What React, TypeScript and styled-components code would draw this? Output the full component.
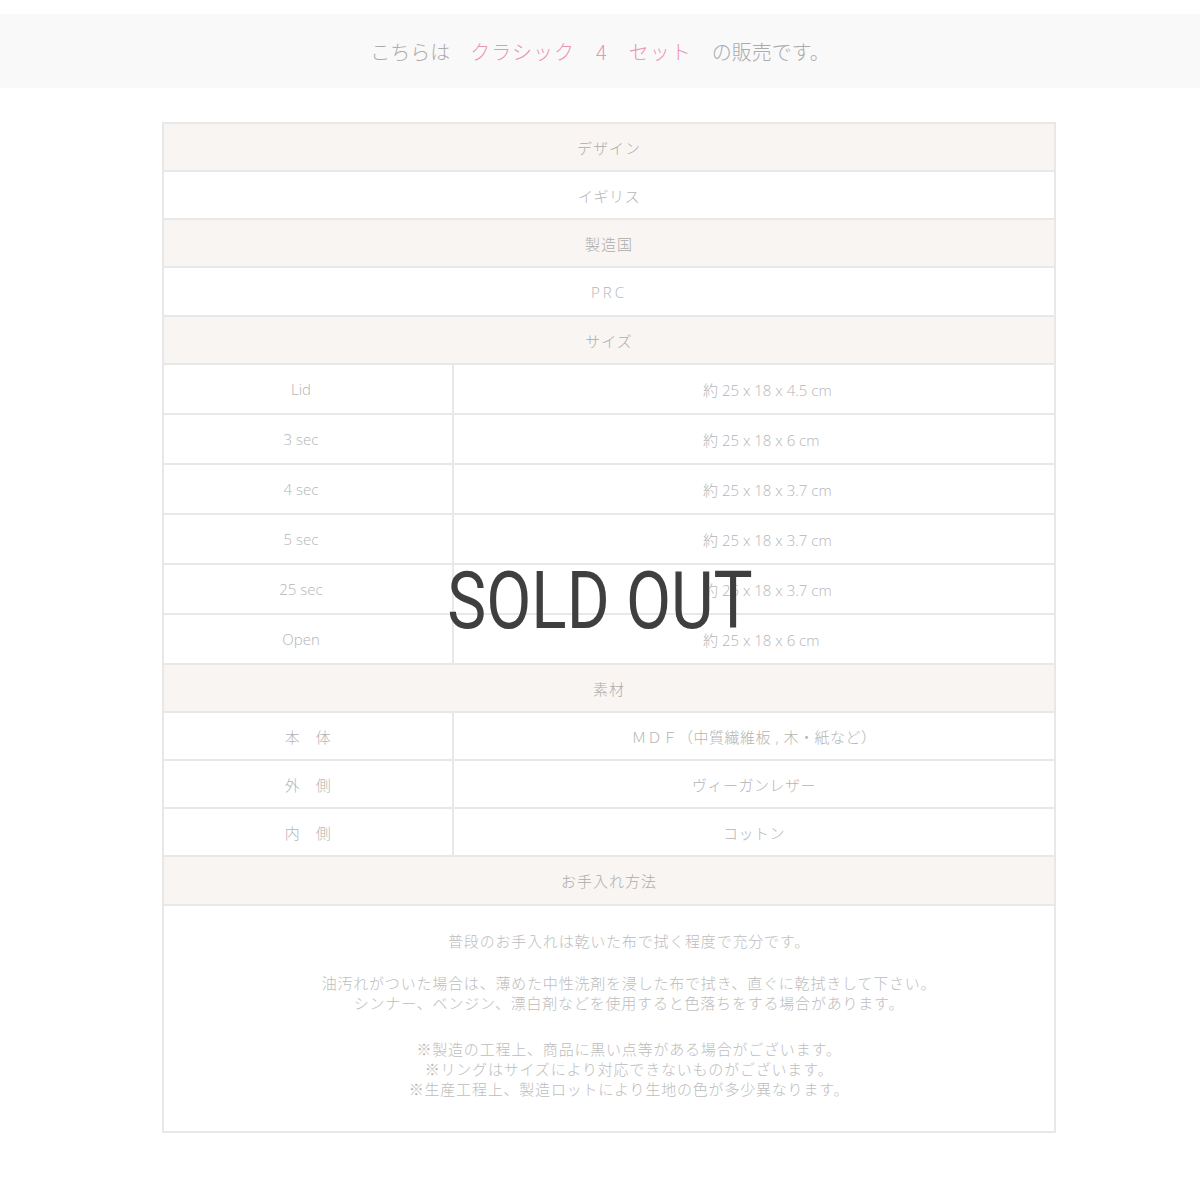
import React from 'react';
import styled, {createGlobalStyle} from 'styled-components';

const Global = createGlobalStyle`
  body {
    margin: 0;
    background: white;
    font-family: "Open Sans", "Noto Sans CJK JP", sans-serif;
  }
`
const Page = styled.div`
  position: relative;
  width: 1200px;
  min-height: 1200px;
  padding-top: 14px;
  box-sizing: border-box;
`
const Banner = styled.div`
  height: 74px;
  background: #f9f9f9;
  display: flex;
  align-items: center;
  justify-content: center;
  font-family: "Noto Sans CJK JP", sans-serif;
  font-size: 20px;
  font-weight: 300;
  color: #ababab;
  white-space: pre;
  >em{
    font-style: normal;
    color: #ea94b6;
    letter-spacing: 1px;
  }
`
const Table = styled.table`
  margin: 34px 0 0 162px;
  width: 894px;
  border-collapse: collapse;
  table-layout: fixed;
  border: 2px solid #e8e8e8;
  color: #b5b5b5;
  font-size: 15px;
  font-weight: 300;
  td {
    border: 2px solid #e8e8e8;
    text-align: center;
    padding: 0;
  }
`
const Head = styled.td<{h?: number}>`
  background: #f8f5f3;
  height: ${p => p.h || 46}px;
  letter-spacing: 1px;
  color: #acacac;
`
const Cell = styled.td<{h?: number; wide?: boolean}>`
  height: ${p => p.h || 46}px;
  letter-spacing: ${p => p.wide ? '3px' : '0.5px'};
`
const SizeLabel = styled.td`
  height: 48px;
  padding-right: 14px !important;
`
const SizeValue = styled.td`
  height: 48px;
  text-align: left !important;
  padding-left: 249px !important;
  letter-spacing: 0;
`
const Note = styled.td`
  padding: 25px 0 32px 40px !important;
  font-family: "Noto Sans CJK JP", sans-serif;
  font-size: 15px;
  letter-spacing: 0.8px;
  line-height: 20px;
  color: #bdbdbd;
  >p{
    margin: 0 0 22px;
  }
  >p:nth-child(2){
    margin-bottom: 26px;
  }
  >p:last-child{
    margin: 0;
  }
`
const SoldOut = styled.div`
  position: absolute;
  top: 562px;
  left: 0;
  right: 0;
  text-align: center;
  font-family: Roboto, sans-serif;
  font-size: 79px;
  line-height: 1;
  color: #3f3f3f;
  transform: scaleX(0.83);
  pointer-events: none;
`

const sizes = [
  ['Lid', '約 25 x 18 x 4.5 cm'],
  ['3 sec', '約 25 x 18 x 6 cm'],
  ['4 sec', '約 25 x 18 x 3.7 cm'],
  ['5 sec', '約 25 x 18 x 3.7 cm'],
  ['25 sec', '約 25 x 18 x 3.7 cm'],
  ['Open', '約 25 x 18 x 6 cm'],
]
const materials = [
  ['本　体', 'ＭＤＦ（中質繊維板 , 木・紙など）'],
  ['外　側', 'ヴィーガンレザー'],
  ['内　側', 'コットン'],
]

export default function App() {
  return (
    <Page>
      <Global/>
      <Banner>
        こちらは　<em>クラシック　4　セット</em>　の販売です。
      </Banner>
      <Table>
        <colgroup>
          <col style={{width: 290}}/>
          <col/>
        </colgroup>
        <tbody>
          <tr><Head colSpan={2}>デザイン</Head></tr>
          <tr><Cell colSpan={2}>イギリス</Cell></tr>
          <tr><Head colSpan={2}>製造国</Head></tr>
          <tr><Cell colSpan={2} h={47} wide>PRC</Cell></tr>
          <tr><Head colSpan={2}>サイズ</Head></tr>
          {sizes.map(([k, v]) =>
            <tr key={k}>
              <SizeLabel>{k}</SizeLabel>
              <SizeValue>{v}</SizeValue>
            </tr>)}
          <tr><Head colSpan={2}>素材</Head></tr>
          {materials.map(([k, v]) =>
            <tr key={k}>
              <Cell>{k}</Cell>
              <Cell>{v}</Cell>
            </tr>)}
          <tr><Head colSpan={2} h={47}>お手入れ方法</Head></tr>
          <tr>
            <Note colSpan={2}>
              <p>普段のお手入れは乾いた布で拭く程度で充分です。</p>
              <p>油汚れがついた場合は、薄めた中性洗剤を浸した布で拭き、直ぐに乾拭きして下さい。<br/>
                シンナー、ベンジン、漂白剤などを使用すると色落ちをする場合があります。</p>
              <p>※製造の工程上、商品に黒い点等がある場合がございます。<br/>
                ※リングはサイズにより対応できないものがございます。<br/>
                ※生産工程上、製造ロットにより生地の色が多少異なります。</p>
            </Note>
          </tr>
        </tbody>
      </Table>
      <SoldOut>SOLD OUT</SoldOut>
    </Page>
  );
}
